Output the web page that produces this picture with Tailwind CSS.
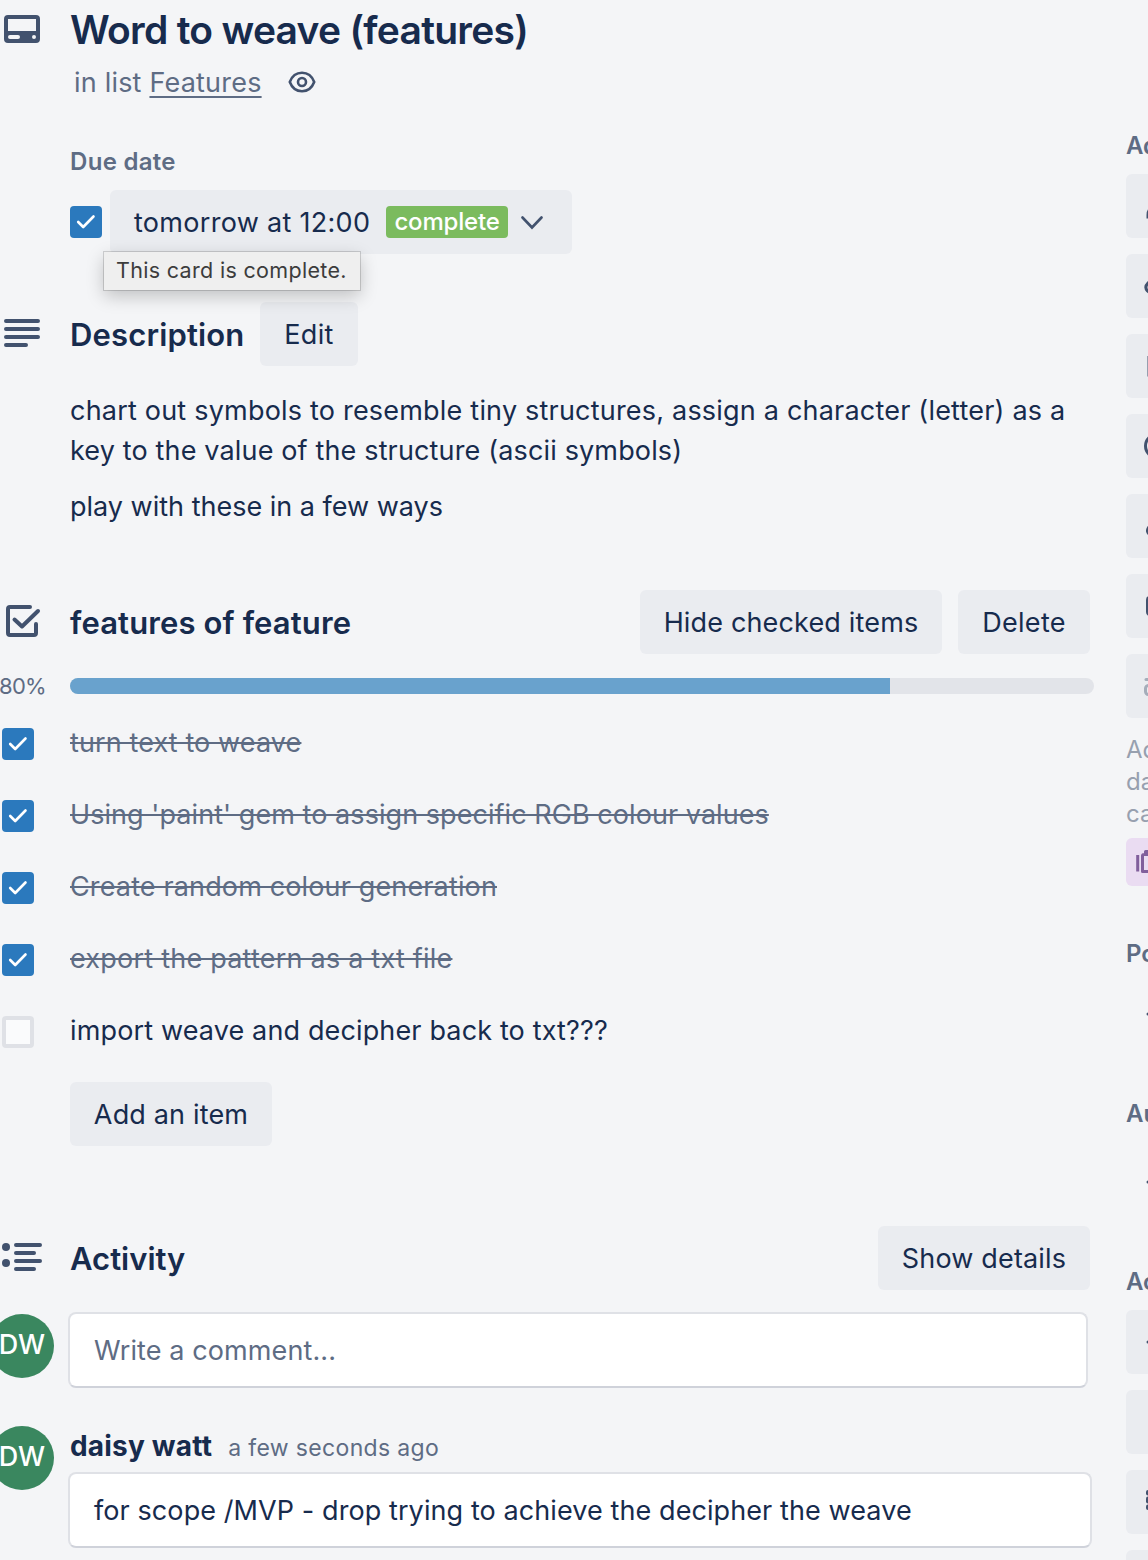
<!DOCTYPE html>
<html lang="en">
<head>
<meta charset="utf-8">
<title>Word to weave (features)</title>
<script src="https://cdn.jsdelivr.net/npm/@tailwindcss/browser@4"></script>
</head>
<body class="bg-[#f4f5f7]">
<div class="flex w-[1148px] h-[1560px] overflow-hidden bg-[#f4f5f7] font-['Inter',sans-serif] text-[27px] text-[#172b4d] whitespace-nowrap">
  <main class="flex flex-col w-[1126px] shrink-0">
    <header class="flex h-[60px] items-center">
      <div class="w-[70px] shrink-0">
        <svg class="block ml-1 -mt-[2px]" width="36" height="28" viewBox="0 0 36 28"><path fill="#42526e" fill-rule="evenodd" d="M4 0h28a4 4 0 0 1 4 4v20a4 4 0 0 1-4 4H4a4 4 0 0 1-4-4V4a4 4 0 0 1 4-4zM4 4v12h28V4zM6 20a2 2 0 0 0 0 4h8a2 2 0 0 0 0-4zM30 20a2 2 0 1 0 0 4a2 2 0 0 0 0-4z"/></svg>
      </div>
      <h1 class="text-[39px] font-semibold tracking-[-0.73px]">Word to weave (features)</h1>
    </header>
    <div class="flex h-[46px] items-center pl-[74px] text-[#5e6c84]">
      <p class="tracking-[0.2px]">in list <span class="underline decoration-2 underline-offset-4">Features</span></p>
      <svg class="ml-[26px] -mt-[2px]" width="28" height="22" viewBox="0 0 28 22" fill="none" stroke="#42526e" stroke-width="2.600"><path d="M1.800 11C4 5.200 8.500 1.800 14 1.800S24 5.200 26.200 11C24 16.800 19.500 20.200 14 20.200S4 16.800 1.800 11z"/><circle cx="14" cy="11" r="4"/></svg>
    </div>
    <h3 class="mt-10 h-8 leading-8 pl-[70px] text-[24px] font-semibold tracking-[0.3px] text-[#5e6c84]">Due date</h3>
    <div class="relative mt-3 flex h-16 items-center pl-[70px]">
      <span class="flex size-8 items-center justify-center rounded-[4px] bg-[#2b79bd]"><svg width="20" height="16" viewBox="0 0 20 16" fill="none" stroke="#fff" stroke-width="2.600" stroke-linecap="round" stroke-linejoin="round"><path d="M2.200 8l5 5L17.500 2.500"/></svg></span>
      <button class="ml-2 flex h-16 w-[462px] items-center rounded-[6px] bg-[#eaecf0] pl-6">
        <span class="w-[252px] pt-[2px] text-left tracking-[0.3px]">tomorrow at 12:00</span>
        <span class="flex h-8 w-[122px] items-center justify-center rounded-[4px] bg-[#7bbb5e] text-[24px] font-medium tracking-[-0.2px] text-white">complete</span>
        <svg class="ml-[13px] mt-[2px]" width="22" height="14" viewBox="0 0 22 14" fill="none" stroke="#42526e" stroke-width="2.600" stroke-linecap="round"><path d="M1.500 1.500L11 11.500L20.500 1.500"/></svg>
      </button>
      <div class="absolute left-[104px] top-[62px] z-10 flex h-[38px] w-[256px] items-center bg-[#efefef] pb-[2px] pl-3 text-[21.500px] tracking-[0.32px] text-[#3c3c3c] shadow-[0_0_0_1px_rgba(0,0,0,0.15),0_6px_18px_rgba(0,0,0,0.22)]">This card is complete.</div>
    </div>
    <section class="mt-12">
      <div class="flex h-16 items-center">
        <div class="w-[70px] shrink-0"><svg class="ml-1 -mt-[2px]" width="36" height="28" viewBox="0 0 36 28" stroke="#42526e" stroke-width="4" stroke-linecap="round"><path d="M2 2H34M2 10H34M2 18H34M2 26H22"/></svg></div>
        <h2 class="w-[190px] pt-[2px] text-[31px] font-semibold tracking-[0.15px]">Description</h2>
        <button class="h-16 w-[98px] rounded-[6px] bg-[#eaecf0] pt-[2px] tracking-[0.3px]">Edit</button>
      </div>
      <div class="mt-[25px] pl-[70px] leading-10">
        <p class="tracking-[0.205px]">chart out symbols to resemble tiny structures, assign a character (letter) as a</p>
        <p class="tracking-[0.15px]">key to the value of the structure (ascii symbols)</p>
        <p class="mt-4">play with these in a few ways</p>
      </div>
    </section>
    <section class="mt-[63px]">
      <div class="flex h-16 items-center">
        <div class="w-[70px] shrink-0"><svg class="ml-1 -mt-[2px]" width="38" height="34" viewBox="-2 0 38 34" fill="none" stroke="#42526e" stroke-width="4" stroke-linecap="round" stroke-linejoin="round"><path d="M24 3H4a2 2 0 0 0-2 2V29a2 2 0 0 0 2 2H28a2 2 0 0 0 2-2V20"/><path d="M8.500 15.500L16 22.500L32 7"/></svg></div>
        <h2 class="w-[570px] pt-[2px] text-[31px] font-semibold tracking-[0.12px]">features of feature</h2>
        <button class="h-16 w-[302px] rounded-[6px] bg-[#eaecf0] pt-[2px] tracking-[0.16px]">Hide checked items</button>
        <button class="ml-4 h-16 w-[132px] rounded-[6px] bg-[#eaecf0] pt-[2px] tracking-[0.3px]">Delete</button>
      </div>
      <div class="mt-6 flex h-4 items-center">
        <span class="-ml-[1px] w-[71px] text-[22px] tracking-[-0.7px] text-[#5e6c84]">80%</span>
        <div class="h-4 w-[1024px] overflow-hidden rounded-full bg-[#e2e4e9]"><div class="h-4 w-[820px] bg-[#69a2cd]"></div></div>
      </div>
      <ul class="mt-[13px] text-[#5e6c84]">
        <li class="flex h-[72px] items-center"><span class="ml-0.5 mt-0.5 mr-9 flex size-8 items-center justify-center rounded-[4px] bg-[#2b79bd]"><svg width="20" height="16" viewBox="0 0 20 16" fill="none" stroke="#fff" stroke-width="2.600" stroke-linecap="round" stroke-linejoin="round"><path d="M2.200 8l5 5L17.500 2.500"/></svg></span><span class="line-through decoration-2 tracking-[0.11px]">turn text to weave</span></li>
        <li class="flex h-[72px] items-center"><span class="ml-0.5 mt-0.5 mr-9 flex size-8 items-center justify-center rounded-[4px] bg-[#2b79bd]"><svg width="20" height="16" viewBox="0 0 20 16" fill="none" stroke="#fff" stroke-width="2.600" stroke-linecap="round" stroke-linejoin="round"><path d="M2.200 8l5 5L17.500 2.500"/></svg></span><span class="line-through decoration-2 tracking-[0.055px]">Using 'paint' gem to assign specific RGB colour values</span></li>
        <li class="flex h-[72px] items-center"><span class="ml-0.5 mt-0.5 mr-9 flex size-8 items-center justify-center rounded-[4px] bg-[#2b79bd]"><svg width="20" height="16" viewBox="0 0 20 16" fill="none" stroke="#fff" stroke-width="2.600" stroke-linecap="round" stroke-linejoin="round"><path d="M2.200 8l5 5L17.500 2.500"/></svg></span><span class="line-through decoration-2 tracking-[0.14px]">Create random colour generation</span></li>
        <li class="flex h-[72px] items-center"><span class="ml-0.5 mt-0.5 mr-9 flex size-8 items-center justify-center rounded-[4px] bg-[#2b79bd]"><svg width="20" height="16" viewBox="0 0 20 16" fill="none" stroke="#fff" stroke-width="2.600" stroke-linecap="round" stroke-linejoin="round"><path d="M2.200 8l5 5L17.500 2.500"/></svg></span><span class="line-through decoration-2 tracking-[0.22px]">export the pattern as a txt file</span></li>
        <li class="flex h-[72px] items-center text-[#172b4d]"><span class="ml-0.5 mt-0.5 mr-9 size-8 rounded-[4px] border-4 border-[#dfe1e6] bg-[#fafbfc]"></span><span class="tracking-[0.14px]">import weave and decipher back to txt???</span></li>
      </ul>
      <button class="ml-[70px] mt-[15px] block h-16 w-[202px] rounded-[6px] bg-[#eaecf0] pt-[2px] tracking-[0.16px]">Add an item</button>
    </section>
    <section class="mt-20">
      <div class="flex h-16 items-center">
        <div class="w-[70px] shrink-0"><svg class="ml-0.5 -mt-[2px]" width="40" height="28" viewBox="0 0 40 28" fill="#42526e" stroke="#42526e" stroke-width="4" stroke-linecap="round"><circle cx="4" cy="4" r="4" stroke="none"/><circle cx="4" cy="20" r="4" stroke="none"/><path d="M14 2H38M14 10H32M14 18H38M14 26H32"/></svg></div>
        <h2 class="w-[808px] pt-[2px] text-[31px] font-semibold">Activity</h2>
        <button class="h-16 w-[212px] rounded-[6px] bg-[#eaecf0] pt-[2px] tracking-[0.16px]">Show details</button>
      </div>
      <div class="mt-[22px] flex h-[76px]">
        <span class="-ml-[10px] mt-0.5 flex size-16 shrink-0 items-center justify-center rounded-full bg-[#3a875f] pb-[2px] text-[27px] font-medium text-white">DW</span>
        <div class="ml-[14px] flex h-[76px] w-[1020px] items-center rounded-[8px] border-2 border-[#dfe1e6] border-b-[#cfd2da] bg-white pt-[2px] pl-6 tracking-[0.1px] text-[#5e6c84]">Write a comment...</div>
      </div>
      <div class="mt-[38px] flex">
        <span class="-ml-[10px] flex size-16 shrink-0 items-center justify-center rounded-full bg-[#3a875f] pb-[2px] text-[27px] font-medium text-white">DW</span>
        <div class="ml-[14px]">
          <div class="flex h-[46px] items-baseline pl-0.5 leading-[40px]"><span class="text-[28px] font-bold tracking-[0.2px]">daisy watt</span><span class="ml-4 text-[23px] tracking-[0.35px] text-[#5e6c84]">a few seconds ago</span></div>
          <div class="flex h-[76px] w-[1024px] items-center rounded-[8px] border-2 border-[#dfe1e6] border-b-[#cfd2da] bg-white pt-[2px] pl-6 tracking-[0.09px]">for scope /MVP - drop trying to achieve the decipher the weave</div>
        </div>
      </div>
    </section>
  </main>
  <aside class="flex w-[240px] shrink-0 flex-col text-[#42526e]">
    <h3 class="mt-[130px] h-8 shrink-0 text-[24px] leading-8 font-semibold text-[#5e6c84]">Add to card</h3>
    <div class="mt-3 flex shrink-0 flex-col gap-4">
      <div class="flex h-16 items-center rounded-[6px] bg-[#eaecf0] pl-[18px]"><svg width="28" height="28" viewBox="0 0 28 28" fill="none" stroke="#42526e" stroke-width="3"><circle cx="14" cy="8" r="5.500"/><path d="M4 25V23Q4 16 11 16H18Q25 16 25 23V25z"/></svg></div>
      <div class="flex h-16 items-center rounded-[6px] bg-[#eaecf0] pl-[18px]"><svg width="28" height="28" viewBox="0 0 28 28" fill="none" stroke="#42526e" stroke-width="3"><path d="M4 11L12 3Q13 2 14 2H24V12L13 23Q11 25 9 23L3.500 19Q0 15 4 11z"/></svg></div>
      <div class="flex h-16 items-center rounded-[6px] bg-[#eaecf0] pl-[21px]"><svg width="24" height="22" viewBox="0 0 24 22" fill="none" stroke="#42526e" stroke-width="3"><path d="M15 2.500H2V20H20V12M7 9L12 14L22 4"/></svg></div>
      <div class="flex h-16 items-center rounded-[6px] bg-[#eaecf0] pl-[18px]"><svg width="26" height="26" viewBox="0 0 26 26" fill="none" stroke="#42526e" stroke-width="3"><circle cx="13" cy="13" r="11.500"/><path d="M13 6V14H19"/></svg></div>
      <div class="flex h-16 items-center rounded-[6px] bg-[#eaecf0] pl-[20px]"><svg width="26" height="26" viewBox="0 0 26 26" fill="none" stroke="#42526e" stroke-width="3"><path d="M16 7L8 15Q8 20 13 18L22 9Q24 4 19 3Q17 2 14 5L3 14Q0 18 3 21Q8 26 13 22L22 14"/></svg></div>
      <div class="flex h-16 items-center rounded-[6px] bg-[#eaecf0] pl-[20px]"><svg width="26" height="22" viewBox="0 0 26 22" fill="none" stroke="#42526e" stroke-width="4"><rect x="2" y="3" width="22" height="16" rx="2"/></svg></div>
      <div class="flex h-16 items-center rounded-[6px] bg-[#eaecf0] pl-[18px]"><svg width="26" height="20" viewBox="0 0 26 20" fill="none" stroke="#a5adba" stroke-width="3" stroke-linecap="round"><path d="M2 3.500H24"/><rect x="1.500" y="9.500" width="22" height="9" rx="3"/></svg></div>
    </div>
    <p class="mt-4 shrink-0 text-[24px] leading-8 text-[#97a0af]">Add dropdowns, text fields,<br>dates, and more to your<br>cards.</p>
    <div class="mt-2 flex h-12 shrink-0 items-center rounded-[6px] bg-[#eadcf2] pl-[10px]"><svg width="32" height="24" viewBox="0 0 32 24" fill="none" stroke="#815f9c" stroke-width="3" stroke-linejoin="round"><path d="M1.700 5V21.500M8 4.500H28V21.500H6.500V6Q6.500 4.500 8 4.500M9.500 4V1.500H20V4"/></svg></div>
    <h3 class="mt-[52px] h-8 shrink-0 text-[24px] leading-8 font-semibold text-[#5e6c84]">Power-Ups</h3>
    <div class="mt-3 flex h-16 shrink-0 items-center pl-[20px]"><svg width="20" height="20" viewBox="0 0 20 20" stroke="#42526e" stroke-width="3" stroke-linecap="round"><path d="M10 2V18M2 10H18"/></svg></div>
    <h3 class="mt-[52px] h-8 shrink-0 text-[24px] leading-8 font-semibold text-[#5e6c84]">Automation</h3>
    <div class="mt-5 flex h-16 shrink-0 items-center pl-[20px]"><svg width="20" height="20" viewBox="0 0 20 20" stroke="#42526e" stroke-width="3" stroke-linecap="round"><path d="M10 2V18M2 10H18"/></svg></div>
    <h3 class="mt-[52px] h-8 shrink-0 text-[24px] leading-8 font-semibold text-[#5e6c84]">Actions</h3>
    <div class="mt-3 flex shrink-0 flex-col gap-4">
      <div class="flex h-16 items-center rounded-[6px] bg-[#eaecf0] pl-[20px]"><svg width="24" height="20" viewBox="0 0 24 20" fill="none" stroke="#42526e" stroke-width="3" stroke-linecap="round"><path d="M2 10H22M15 3L22 10L15 17"/></svg></div>
      <div class="h-16 rounded-[6px] bg-[#eaecf0]"></div>
      <div class="flex h-16 items-center rounded-[6px] bg-[#eaecf0] pl-[20px]"><svg class="-mt-1" width="24" height="24" viewBox="0 0 24 24" fill="#42526e"><rect y="2" width="24" height="5.500" rx="2"/><rect y="8.500" width="24" height="7" rx="2"/><rect y="16.500" width="24" height="5.500" rx="2"/></svg></div>
      <div class="h-16 rounded-[6px] bg-[#eaecf0]"></div>
    </div>
  </aside>
</div>
</body>
</html>
